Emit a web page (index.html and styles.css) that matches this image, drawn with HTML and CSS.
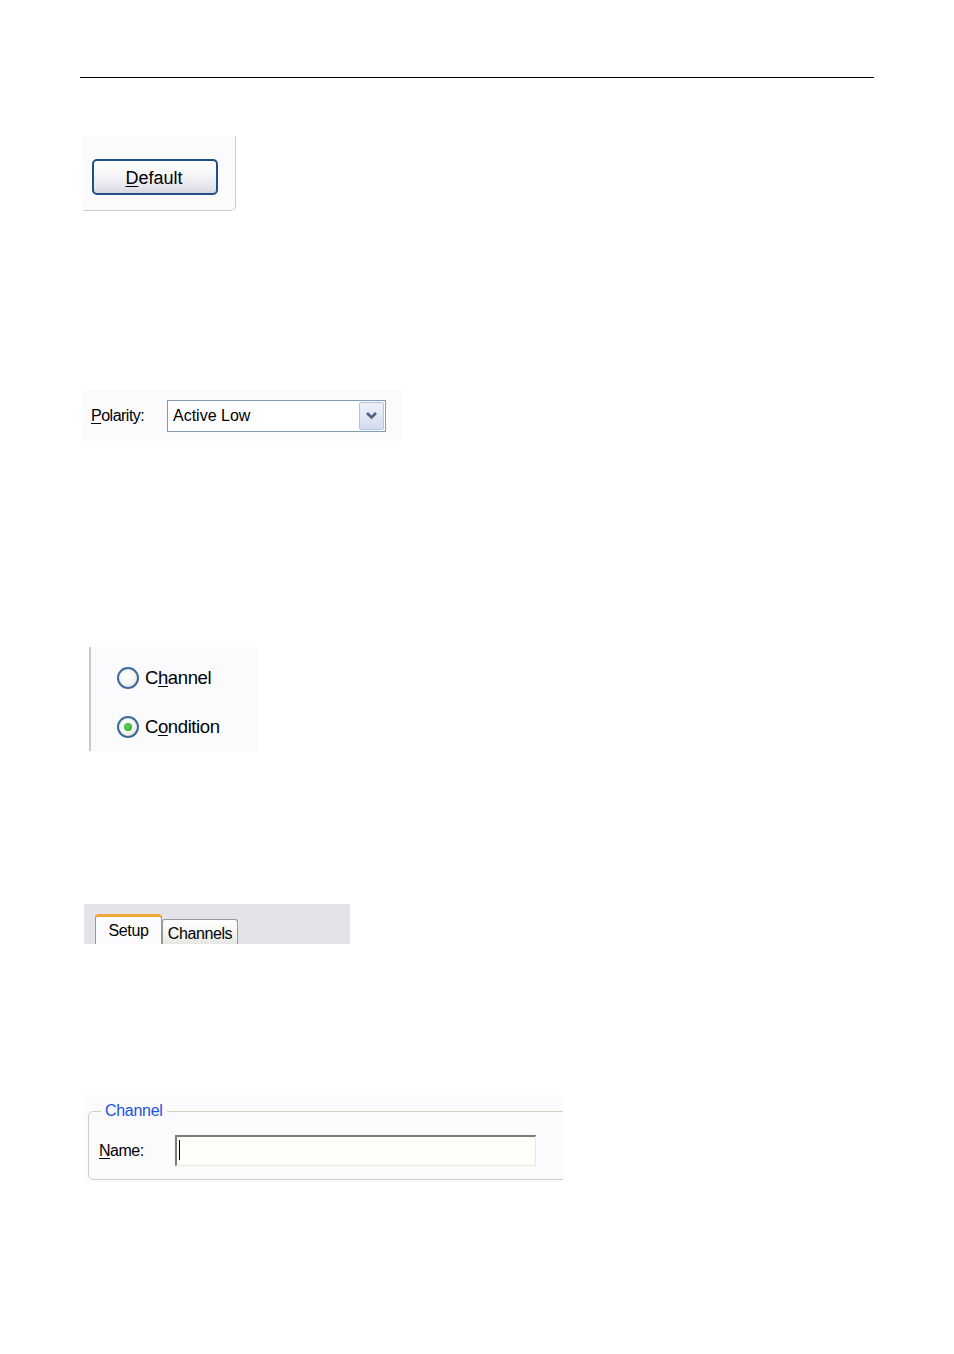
FILE: index.html
```html
<!DOCTYPE html>
<html>
<head>
<meta charset="utf-8">
<link rel="stylesheet" href="styles.css">
</head>
<body>
<div class="page">
  <div class="rule"></div>

  <div class="panel panel-button">
    <button class="xp-button"><u>D</u>efault</button>
  </div>

  <div class="panel panel-combo">
    <span class="label"><u>P</u>olarity:</span>
    <div class="combo">
      <span class="combo-text">Active Low</span>
      <span class="combo-btn">
        <svg width="13" height="9" viewBox="0 0 13 9"><polyline points="2,2 6.5,6.5 11,2" fill="none" stroke="#4d6185" stroke-width="2.6"/></svg>
      </span>
    </div>
  </div>

  <div class="panel panel-radio">
    <label class="radio-row"><span class="radio"></span><span class="radio-text">C<u>h</u>annel</span></label>
    <label class="radio-row"><span class="radio checked"></span><span class="radio-text">C<u>o</u>ndition</span></label>
  </div>

  <div class="panel panel-tabs">
    <div class="tab active">Setup</div>
    <div class="tab">Channels</div>
  </div>

  <div class="panel panel-group">
    <fieldset class="group">
      <legend>Channel</legend>
      <div class="name-row">
        <span class="label"><u>N</u>ame:</span>
        <div class="textbox"><span class="caret"></span></div>
      </div>
    </fieldset>
  </div>
</div>
</body>
</html>
```

FILE: styles.css
```css
html, body {
  margin: 0;
  padding: 0;
  background: #ffffff;
}
body {
  font-family: "Liberation Sans", Arial, sans-serif;
  color: #000;
}
.page {
  display: flex;
  flex-direction: column;
  align-items: flex-start;
  padding-top: 77px;
}
.rule {
  margin-left: 80px;
  width: 794px;
  height: 0;
  border-top: 1px solid #000;
}
.panel {
  background: #fbfbfd;
  box-sizing: border-box;
}
u {
  text-decoration: underline;
  text-underline-offset: 2px;
}

/* Panel 1: button */
.panel-button {
  margin-top: 58px;
  margin-left: 83px;
  width: 153px;
  height: 75px;
  padding: 23px 0 0 9px;
  border-right: 1px solid #cfcfc6;
  border-bottom: 1px solid #cfcfc6;
  border-bottom-right-radius: 5px;
}
.xp-button {
  display: flex;
  align-items: center;
  justify-content: center;
  width: 126px;
  height: 36px;
  box-sizing: border-box;
  margin: 0;
  padding: 2px 2px 0 0;
  border: 2px solid #1f4f86;
  border-radius: 5px;
  background: linear-gradient(#ffffff 0%, #f7f7f8 40%, #e6e6ee 80%, #d6d6e0 100%);
  font-family: "Liberation Sans", Arial, sans-serif;
  font-size: 18px;
  color: #000;
}

/* Panel 2: combo */
.panel-combo {
  margin-top: 179px;
  margin-left: 83px;
  width: 319px;
  height: 51px;
  display: flex;
  align-items: center;
  padding-left: 8px;
}
.label {
  font-size: 16px;
  letter-spacing: -0.5px;
}
.panel-combo .label {
  width: 76px;
}
.combo {
  display: flex;
  align-items: center;
  justify-content: space-between;
  width: 219px;
  height: 32px;
  box-sizing: border-box;
  border: 1px solid #7f9db9;
  background: #fff;
  padding: 1px;
}
.combo-text {
  padding-left: 4px;
  font-size: 16px;
}
.combo-btn {
  display: flex;
  align-items: center;
  justify-content: center;
  width: 25px;
  height: 28px;
  box-sizing: border-box;
  border: 1px solid #b7c3df;
  border-radius: 2px;
  background: linear-gradient(#eef1f9, #d4dbee);
}

/* Panel 3: radios */
.panel-radio {
  margin-top: 206px;
  margin-left: 89px;
  width: 169px;
  height: 104px;
  border-left: 2px solid #c9c9c9;
  padding: 20px 0 0 26px;
  display: flex;
  flex-direction: column;
  gap: 27px;
}
.radio-row {
  display: flex;
  align-items: center;
  gap: 6px;
  height: 22px;
}
.radio-text {
  font-size: 18.5px;
  letter-spacing: -0.4px;
}
.radio {
  position: relative;
  width: 22px;
  height: 22px;
  box-sizing: border-box;
  border: 2px solid #3d6a9c;
  border-radius: 50%;
  background: radial-gradient(circle at 40% 40%, #ffffff 0%, #f2f2ee 55%, #d8d8d2 100%);
}
.radio.checked::after {
  content: "";
  position: absolute;
  left: 5px;
  top: 5px;
  width: 8px;
  height: 8px;
  border-radius: 50%;
  background: radial-gradient(circle at 40% 40%, #5bd95b, #21a121);
}

/* Panel 4: tabs */
.panel-tabs {
  margin-top: 153px;
  margin-left: 84px;
  width: 266px;
  height: 40px;
  background: #e3e3e8;
  display: flex;
  align-items: flex-end;
  padding-left: 11px;
}
.tab {
  box-sizing: border-box;
  height: 25px;
  width: 76px;
  border: 1px solid #919b9c;
  border-bottom: none;
  border-radius: 3px 3px 0 0;
  background: linear-gradient(#ffffff, #f3f3f0 60%, #e6e6e2);
  font-size: 16px;
  letter-spacing: -0.4px;
  display: flex;
  align-items: center;
  justify-content: center;
  padding-top: 4px;
}
.tab.active {
  width: 67px;
  height: 30px;
  background: #fcfcfe;
  border-top: 3px solid #f0a83a;
  border-radius: 4px 4px 0 0;
  padding-top: 0;
  padding-bottom: 0;
}

/* Panel 5: group box */
.panel-group {
  margin-top: 151px;
  margin-left: 84px;
  width: 479px;
  height: 87px;
  overflow: hidden;
  padding: 6px 0 0 4px;
}
.group {
  margin: 0;
  width: 520px;
  height: 79px;
  box-sizing: border-box;
  border: 1px solid #d0d0bf;
  border-radius: 5px;
  padding: 14px 0 0 10px;
}
.group legend {
  font-size: 16px;
  line-height: 20px;
  color: #1a52e0;
  padding: 0 4px;
  margin-left: 2px;
  letter-spacing: -0.3px;
}
.name-row {
  display: flex;
  align-items: center;
}
.name-row .label {
  width: 76px;
}
.textbox {
  width: 361px;
  height: 31px;
  box-sizing: border-box;
  border-top: 2px solid #7b7b7b;
  border-left: 2px solid #7b7b7b;
  border-right: 1px solid #e8e8dc;
  border-bottom: 1px solid #e8e8dc;
  background: #fffffa;
  display: flex;
  align-items: center;
  padding-left: 2px;
}
.caret {
  width: 1px;
  height: 20px;
  background: #000;
  margin-bottom: 2px;
}
```
